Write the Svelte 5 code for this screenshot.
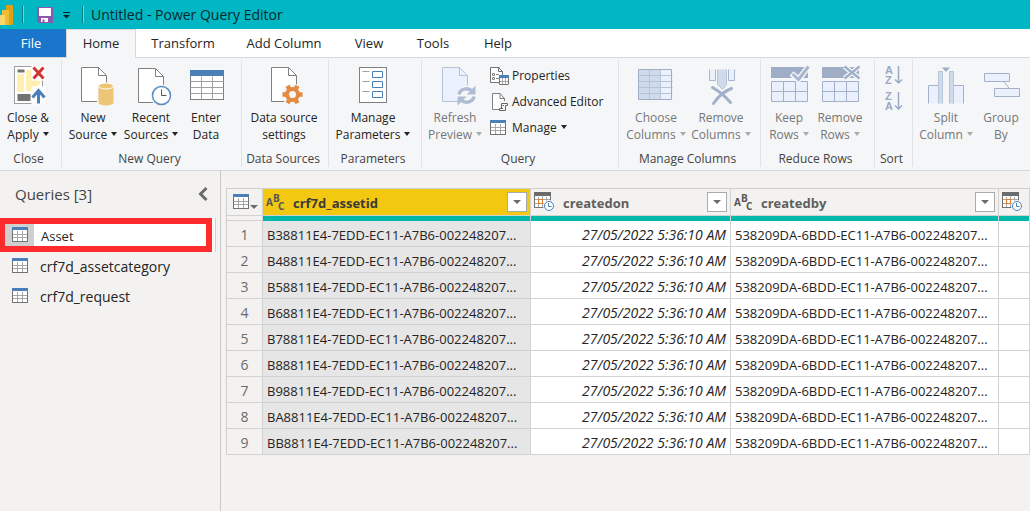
<script>
  const tabs = [
    { label: 'File', width: 66 },
    { label: 'Home', width: 70 },
    { label: 'Transform', width: 94 },
    { label: 'Add Column', width: 108 },
    { label: 'View', width: 62 },
    { label: 'Tools', width: 66 },
    { label: 'Help', width: 64 }
  ];
  let active = $state('Home');

  const groups = [
    { title: 'Close', width: 62, tools: [{ icon: 'close', lines: ['Close &', 'Apply'], menu: true, width: 52 }] },
    {
      title: 'New Query',
      width: 180,
      tools: [
        { icon: 'new', lines: ['New', 'Source'], menu: true, width: 58 },
        { icon: 'recent', lines: ['Recent', 'Sources'], menu: true, width: 58 },
        { icon: 'enter', lines: ['Enter', 'Data'], width: 52 }
      ]
    },
    { title: 'Data Sources', width: 87, tools: [{ icon: 'settings', lines: ['Data source', 'settings'], width: 80 }] },
    { title: 'Parameters', width: 93, tools: [{ icon: 'params', lines: ['Manage', 'Parameters'], menu: true, width: 84 }] },
    {
      title: 'Query',
      width: 197,
      tools: [{ icon: 'refresh', lines: ['Refresh', 'Preview'], menu: true, width: 62, disabled: true }],
      list: [
        { icon: 'props', label: 'Properties' },
        { icon: 'editor', label: 'Advanced Editor' },
        { icon: 'grid', label: 'Manage', menu: true }
      ]
    },
    {
      title: 'Manage Columns',
      width: 142,
      tools: [
        { icon: 'choose', lines: ['Choose', 'Columns'], menu: true, width: 70, disabled: true },
        { icon: 'removecol', lines: ['Remove', 'Columns'], menu: true, width: 60, disabled: true }
      ]
    },
    {
      title: 'Reduce Rows',
      width: 114,
      tools: [
        { icon: 'keep', lines: ['Keep', 'Rows'], menu: true, width: 52, disabled: true },
        { icon: 'removerow', lines: ['Remove', 'Rows'], menu: true, width: 50, disabled: true }
      ]
    },
    { title: 'Sort', width: 38, sort: true, tools: [] },
    {
      title: '',
      width: 118,
      tools: [
        { icon: 'split', lines: ['Split', 'Column'], menu: true, width: 62, disabled: true },
        { icon: 'group', lines: ['Group', 'By'], width: 48, disabled: true }
      ]
    }
  ];

  const queries = ['Asset', 'crf7d_assetcategory', 'crf7d_request'];
  let selected = $state('Asset');

  const prefixes = ['B3', 'B4', 'B5', 'B6', 'B7', 'B8', 'B9', 'BA', 'BB'];
  const rows = prefixes.map((p) => ({
    id: `${p}8811E4-7EDD-EC11-A7B6-002248207...`,
    on: '27/05/2022 5:36:10 AM',
    by: '538209DA-6BDD-EC11-A7B6-002248207...'
  }));
</script>

{#snippet page(x, y, stroke, fill)}
  <path d="M{x + 17} {y}H{x}V{y + 34}H{x + 25}V{y + 8}L{x + 17} {y}V{y + 8}H{x + 25}" {fill} {stroke} />
{/snippet}

{#snippet gridIcon()}
  <svg class="small" width="16" height="16" viewBox="0 0 16 16" aria-hidden="true">
    <rect x="0.5" y="1.5" width="15" height="13" fill="#fff" stroke="#737373" />
    <path d="M5.5 4V14M10.5 4V14M1 7.5H15M1 10.5H15" stroke="#a6a6a6" />
    <rect width="16" height="3" fill="#4a7fb8" />
  </svg>
{/snippet}

{#snippet dateIcon()}
  <svg width="21" height="20" viewBox="0 0 21 20" aria-hidden="true">
    <rect x="0.5" y="1.5" width="16" height="14" fill="#fff" stroke="#737373" />
    <path d="M4.5 5V15M8.5 4V15M12.5 5V15M1 7.5H16M1 11.5H16" stroke="#a6a6a6" />
    <rect width="17" height="4" fill="#6b6b6b" />
    <rect x="4.5" y="7.5" width="4" height="4" fill="#fff" stroke="#e07b2b" />
    <circle cx="15" cy="14" r="6" fill="#f3f2f1" />
    <circle cx="15" cy="14" r="4.5" fill="#fff" stroke="#4a7fb8" />
    <path d="M14.5 11V14.5H17.5" fill="none" stroke="#4a7fb8" />
  </svg>
{/snippet}

{#snippet abcIcon()}
  <svg width="19" height="18" viewBox="0 0 19 18" aria-hidden="true">
    <g font-family="'Open Sans', sans-serif" font-weight="700" font-size="10" fill="#555">
      <text x="0" y="13">A</text><text x="7" y="9">B</text><text x="12" y="17">C</text>
    </g>
  </svg>
{/snippet}

{#snippet bigIcon(name)}
  <svg width="48" height="42" viewBox="0 0 48 42" fill="none" aria-hidden="true">
    <g transform="translate(.5 .5)">
      {#if name === 'close'}
        <rect x="10" y="2" width="28" height="37" fill="#fff" stroke="#a0a0a0" />
        <path d="M13 5h7v3h-7zM13 29.5h13v7H13z" fill="#737373" />
        <path d="M12.500 9.500h7v18h-7zM21.500 5.500h7v6l4 5h5l-9 10h-7z" fill="#ffefb0" />
        <path d="M27 1h14v15H27zM27 22h14v18H27z" fill="#fdfdfd" />
        <path d="M29 3L39 14M39 3L29 14" stroke="#d13434" stroke-width="3" />
        <path d="M28 33L34 26L40 33M34 26V39" stroke="#4a7fb8" stroke-width="3" />
      {:else if name === 'new'}
        {@render page(12, 3, '#808080', '#fff')}
        <path d="M27.500 20h18v22h-18z" fill="#f5f6f7" />
        <path d="M29 21v17c0 4 15 4 15 0V21z" fill="#edc577" />
        <ellipse cx="36.500" cy="21.500" rx="7.500" ry="3" fill="#edc577" stroke="#fff" />
      {:else if name === 'recent'}
        {@render page(11, 4, '#808080', '#fff')}
        <circle cx="34" cy="31" r="11" fill="#f5f6f7" />
        <circle cx="34" cy="31" r="9" fill="#fff" stroke="#5b8fc4" stroke-width="1.500" />
        <path d="M34 25V31H39" stroke="#555" />
      {:else if name === 'enter'}
        <rect x="8" y="7" width="33" height="28" fill="#fff" stroke="#808080" />
        <path d="M19 12V35M30 12V35M8 17H41M8 23H41M8 29H41" stroke="#a0a0a0" />
        <path d="M7.500 5.500h34v6h-34z" fill="#4a7fb8" />
      {:else if name === 'settings'}
        {@render page(11, 3, '#808080', '#fff')}
        <circle cx="32" cy="30" r="11" fill="#f5f6f7" />
        <g transform="translate(32 30)" stroke="#e58b41">
          <circle r="5.500" stroke-width="4" />
          <path d="M-10 0h4M6 0h4M-5 -8.700l2 3.500M3 5.200l2 3.500M5 -8.700l-2 3.500M-3 5.200l-2 3.500" stroke-width="4.500" />
        </g>
      {:else if name === 'params'}
        <rect x="10" y="3" width="27" height="35" fill="#fff" stroke="#808080" />
        <path d="M13 7h7M13 17h7M13 27h7" stroke="#a0a0a0" />
        <path d="M23 7h10v6H23zM23 17h10v6H23zM23 27h10v6H23z" stroke="#4a7fb8" />
      {:else if name === 'refresh'}
        {@render page(11, 3, '#b4c1d7', '#eaf1fc')}
        <circle cx="35" cy="31" r="10" fill="#f5f6f7" />
        <path d="M27.500 30a7.500 6.500 0 0 1 13-3.500M42.500 32a7.500 6.500 0 0 1-13 3.500" stroke="#afbcd3" stroke-width="3.500" />
        <path d="M44 21v9h-9zM26 41v-9h9z" fill="#afbcd3" />
      {:else if name === 'choose'}
        <path d="M6 5H40V35H6z" fill="#eaf1fc" />
        <path d="M6 5H28V35H6z" fill="#cfdaea" />
        <path d="M17 5V35M28 5V35M6 11H40M6 17H40M6 23H40M6 29H40" stroke="#b6c4da" />
        <path d="M6 5H39V35H6z" stroke="#9fadc7" />
      {:else if name === 'removecol'}
        <path d="M12 5V16H18V5M31 5V16H37V5" fill="#eaf1fc" stroke="#a9b6cf" />
        <path d="M20 5V20L25 25L29 20V5" fill="#cfdaea" stroke="#b6c4da" />
        <path d="M14 22C21 26 29 32 34 39M34 23C26 27 20 33 15 39" stroke="#f5f6f7" stroke-width="6" />
        <path d="M15 23C22 27 28 32 33 38M34 24C26 27 20 33 16 39" stroke="#a3b0ca" stroke-width="3" stroke-linecap="round" />
      {:else if name === 'keep' || name === 'removerow'}
        <path d="M5.500 2.500h37v11h-37z" fill="#9fadc7" />
        <path d="M6 17H42V37H6z" fill="#eaf1fc" stroke="#a3b0ca" />
        <path d="M18 17V37M30 17V37M6 27H42" stroke="#a3b0ca" />
        {#if name === 'keep'}
          <path d="M26 9L33 15L43 2" stroke="#f5f6f7" stroke-width="6" />
          <path d="M27 9.500L33 15L43 2" stroke="#a9b6cf" stroke-width="3" />
        {:else}
          <path d="M28 2L43 14M43 2L28 14" stroke="#f5f6f7" stroke-width="5" />
          <path d="M28 2L43 14M43 2L28 14" stroke="#a3b0ca" stroke-width="2.500" />
        {/if}
      {:else if name === 'split'}
        <path d="M6 39V21H16V39M31 39V21H41V39" fill="#eaf1fc" stroke="#a3b0ca" />
        <path d="M16 39V7H20V39M27 39V7H31V39" fill="#cfdaea" stroke="#b6c4da" />
        <path d="M19.500 3h8l-4 4.500z" fill="#9fadc7" />
      {:else if name === 'group'}
        <path d="M26 17L32 24" stroke="#a3b0ca" />
        <path d="M7 9H32V17H7zM17 24H42V32H17z" fill="#eaf1fc" stroke="#a3b0ca" />
      {/if}
    </g>
  </svg>
{/snippet}

{#snippet sortIcon(a, b)}
  <svg width="18" height="24" viewBox="0 0 18 24" aria-hidden="true">
    <g font-family="'Liberation Sans', sans-serif" font-weight="700" font-size="11" fill="#9aa9c4">
      <text x="0" y="11">{a}</text><text x="0" y="21">{b}</text>
    </g>
    <path d="M13.500 3V20M10 16.500L13.500 20L17 16.500" fill="none" stroke="#9aa9c4" stroke-width="1.500" />
  </svg>
{/snippet}

<div class="app">
  <header class="title">
    <svg width="14" height="22" viewBox="0 0 14 22" aria-hidden="true">
      <rect x="6" y="1" width="7" height="20" rx="1" fill="#dda113" />
      <rect x="2" y="6" width="7" height="15" fill="#eebc36" />
      <rect x="0" y="11" width="5" height="10" fill="#f8d869" />
    </svg>
    <span class="bar"></span>
    <button class="save" aria-label="Save">
      <svg width="16" height="16" viewBox="0 0 16 16">
        <path d="M0 0H16V16H2L0 14z" fill="#8a58ac" />
        <path d="M2 1h12v8H2zM4 11h7v4H4z" fill="#fff" />
        <path d="M5.500 12.500h2V15h-2z" fill="#8a58ac" />
      </svg>
    </button>
    <button class="custom" aria-label="Customize toolbar">
      <svg width="7" height="7" viewBox="0 0 7 7"><path d="M0 .5H7" stroke="#122" /><path d="M0 3h7L3.500 6.500z" fill="#122" /></svg>
    </button>
    <span class="bar"></span>
    <h1>Untitled - Power Query Editor</h1>
  </header>

  <nav class="tabs">
    {#each tabs as t}
      <button
        class:file={t.label === 'File'}
        class:active={active === t.label}
        style:width="{t.width}px"
        onclick={() => (active = t.label)}>{t.label}</button>
    {/each}
  </nav>

  <section class="ribbon">
    {#each groups as g}
      <div class="group" style:width="{g.width}px">
        <div class="tools">
          {#each g.tools as t}
            <button class="tool" disabled={t.disabled} style:width="{t.width}px">
              {@render bigIcon(t.icon)}
              <span>{t.lines[0]}</span>
              <span>{t.lines[1]}{#if t.menu}<i class="caret"></i>{/if}</span>
            </button>
          {/each}
          {#if g.list}
            <div class="list">
              {#each g.list as item}
                <button>
                  {#if item.icon === 'grid'}
                    <span class="slot">{@render gridIcon()}</span>
                  {:else}
                    <svg class="slot" width="20" height="20" viewBox="0 0 20 20" fill="none" aria-hidden="true">
                      {#if item.icon === 'props'}
                        <path d="M9.500 1.500H.5V16.500H12.500V5.500L8.500 1.500V5.500H12.500" fill="#fff" stroke="#737373" />
                        <path d="M2.500 7.500h2v2h-2zM2.500 11.500h2v2h-2zM6 8.500h3M6 12.500h3" stroke="#8a8a8a" />
                        <path d="M9.500 10.500H18.500V18.500H9.500z" fill="#fff" stroke="#737373" />
                        <path d="M12.500 12V18M15.500 12V18M10 15.500H18" stroke="#a6a6a6" />
                        <path d="M9 9h10v3H9z" fill="#4a7fb8" />
                      {:else}
                        <path d="M10 1.500H2.500V17.500H14.500V6.500L10 1.500V6.500H14.500" fill="#fff" stroke="#808080" />
                        <path d="M9 9h9v10H9z" fill="#f5f6f7" />
                        <path d="M11.500 17V11.500H17.500V13.500H15.500V18.500H9.500V16.500H13M12.500 13.500H14" stroke="#666" />
                      {/if}
                    </svg>
                  {/if}
                  {item.label}{#if item.menu}<i class="caret"></i>{/if}
                </button>
              {/each}
            </div>
          {/if}
          {#if g.sort}
            <div class="sort">
              <button disabled aria-label="Sort ascending">{@render sortIcon('A', 'Z')}</button>
              <button disabled aria-label="Sort descending">{@render sortIcon('Z', 'A')}</button>
            </div>
          {/if}
        </div>
        <div class="caption">{g.title}</div>
      </div>
    {/each}
  </section>

  <main>
    <aside>
      <div class="heading">
        <h2>Queries [3]</h2>
        <button aria-label="Collapse queries">
          <svg width="10" height="14" viewBox="0 0 10 14"><path d="M8.500 1L2.500 7L8.500 13" fill="none" stroke="#6b6b6b" stroke-width="3" /></svg>
        </button>
      </div>
      <ul>
        {#each queries as q}
          <li class:selected={selected === q}>
            <button onclick={() => (selected = q)}><span class="cell">{@render gridIcon()}</span><span class="name">{q}</span></button>
          </li>
        {/each}
      </ul>
    </aside>

    <div class="data">
      <table>
        <colgroup><col class="num" /><col class="wide" /><col class="date" /><col class="wide" /><col /></colgroup>
        <thead>
          <tr class="names">
            <th class="corner"><div>{@render gridIcon()}<i class="caret"></i></div></th>
            <th class="picked"><div>{@render abcIcon()}<span>crf7d_assetid</span><button aria-label="Filter crf7d_assetid"><i class="caret"></i></button></div></th>
            <th><div>{@render dateIcon()}<span>createdon</span><button aria-label="Filter createdon"><i class="caret"></i></button></div></th>
            <th><div>{@render abcIcon()}<span>createdby</span><button aria-label="Filter createdby"><i class="caret"></i></button></div></th>
            <th><div>{@render dateIcon()}</div></th>
          </tr>
          <tr class="quality"><td></td><td></td><td></td><td></td><td></td></tr>
        </thead>
        <tbody>
          {#each rows as r, i}
            <tr>
              <th scope="row">{i + 1}</th>
              <td class="picked">{r.id}</td>
              <td class="when">{r.on}</td>
              <td>{r.by}</td>
              <td></td>
            </tr>
          {/each}
        </tbody>
      </table>
    </div>
  </main>
</div>

<style>
  :global(body) { margin: 0; background: #f3f2f1; }
  .app {
    display: flex;
    flex-direction: column;
    min-height: 100vh;
    overflow: hidden;
    font: 12px/16px 'Open Sans', 'Noto Sans', sans-serif;
    color: #252423;
  }
  button { font: inherit; color: inherit; background: none; border: 0; padding: 0; margin: 0; }
  svg { display: block; flex: none; overflow: visible; }
  h1, h2, ul { margin: 0; padding: 0; font-weight: 400; list-style: none; }

  .title { display: flex; align-items: center; height: 29px; background: #00b7c3; color: #08292c; }
  .bar { width: 1px; height: 17px; margin-left: 8px; background: #0b7d85; border-right: 1px solid #6fd5dc; }
  .save { margin-left: 13px; }
  .custom { margin: 2px 5px 0 10px; }
  .custom + .bar { margin-left: 7px; }
  h1 { margin-left: 7px; font-size: 14px; line-height: 20px; white-space: nowrap; }

  .tabs { display: flex; background: #fff; border-bottom: 1px solid #d8d8da; height: 28px; font-size: 13px; }
  .tabs button { box-sizing: border-box; flex: none; height: 28px; }
  .tabs .file { background: #1976ca; color: #fff; padding-right: 4px; }
  .tabs .active { height: 29px; padding-bottom: 2px; background: #f5f6f7; border: 1px solid #d8d8da; border-bottom: 0; }
  .tabs .file.active { background: #1976ca; }

  .ribbon { display: flex; height: 112px; background: #f5f6f7; border-bottom: 1px solid #d5d7da; }
  .group { box-sizing: border-box; flex: none; margin: 2px 0 3px; padding-left: 2px; border-right: 1px solid #e1e2e4; display: flex; flex-direction: column; }
  .group:last-child { border-right: 0; }
  .tools { display: flex; flex: 1; align-items: flex-start; }
  .tool { display: flex; flex-direction: column; align-items: center; flex: none; padding-top: 4px; line-height: 17px; white-space: nowrap; }
  .tool svg { margin-bottom: 3px; }
  .tool:disabled { color: #777; }
  .caret { display: inline-block; border: 3px solid transparent; border-top: 4px solid currentColor; border-bottom: 0; margin-left: 4px; vertical-align: 3px; }
  .tool:disabled .caret { color: #aaa; }
  .caption { padding-right: 6px; text-align: center; color: #444; height: 16px; white-space: nowrap; }
  .list { display: flex; flex-direction: column; margin: 3px 0 0 4px; flex: 1; }
  .list button { display: flex; align-items: center; height: 26px; white-space: nowrap; }
  .slot { width: 20px; margin-right: 2px; }
  .list .caret { margin-bottom: 3px; }
  .sort { display: flex; flex-direction: column; gap: 2px; padding: 3px 0 0 8px; }

  main { display: flex; flex: 1; }
  aside { width: 220px; flex: none; border-right: 1px solid #c9c9c9; }
  .heading { box-sizing: border-box; display: flex; align-items: center; justify-content: space-between; height: 47px; padding: 0 12px 2px 15px; }
  h2 { font-size: 15px; line-height: 20px; color: #444; }
  ul { font-size: 14px; }
  li { height: 30px; box-sizing: border-box; }
  li.selected { width: 212px; height: 34px; border: 5px solid #fd2b2e; border-width: 6px 6px 6px 5px; background: #fff; margin-bottom: -1px; box-shadow: 3px 0 0 #f8f8f8, 4px 0 0 #d0d0d0; }
  li button { display: flex; align-items: center; width: 100%; height: 100%; }
  .cell { display: flex; align-items: center; height: 100%; padding: 0 6px 0 12px; }
  .name { margin-left: 6px; padding-top: 1px; }
  .selected .cell { background: #cfcfcf; padding-left: 7px; }
  .selected .name { margin-left: 7px; font-size: 13px; }

  .data { flex: 1; min-width: 0; padding: 17px 0 0 5px; }
  table { width: 100%; table-layout: fixed; border-spacing: 0; border-top: 1px solid #cfcfcf; border-left: 1px solid #cfcfcf; }
  .num { width: 36px; }
  .wide { width: 268px; }
  .date { width: 200px; }
  th, td { box-sizing: border-box; padding: 0; border-right: 1px solid #d2d2d2; border-bottom: 1px solid #d2d2d2; white-space: nowrap; }
  .names th { height: 27px; text-align: left; background: #f3f2f1; font-weight: 700; color: #605e5c; }
  .names th.picked { background: #f2c811; color: #3b3a39; }
  .names div { display: flex; align-items: center; height: 26px; padding: 0 3px; }
  .names span { flex: 1; margin-left: 8px; padding-top: 1px; font-size: 13px; }
  .names button { box-sizing: border-box; width: 20px; height: 20px; display: flex; align-items: center; justify-content: center; background: #fff; border: 1px solid #aaa; }
  .names .caret { color: #6b6b6b; margin: 0; border-width: 4px 4px 0; }
  .names .corner div { padding: 0 0 0 6px; }
  .names .corner .caret { margin: 10px 0 0 1px; }
  .quality td { height: 5px; background: #01b8aa; border-bottom: 0; }
  .quality td:first-child { background: #f3f2f1; border-bottom: 1px solid #d2d2d2; }
  tbody th { height: 26px; padding-top: 2px; font-size: 14px; font-weight: 400; color: #6b6b6b; background: #f3f2f1; }
  tbody td { height: 26px; padding: 2px 4px 0; font-size: 13px; background: #fff; overflow: hidden; }
  tbody .picked { background: #e6e6e6; }
  tbody .when { text-align: right; font-style: italic; font-size: 14px; }
</style>
